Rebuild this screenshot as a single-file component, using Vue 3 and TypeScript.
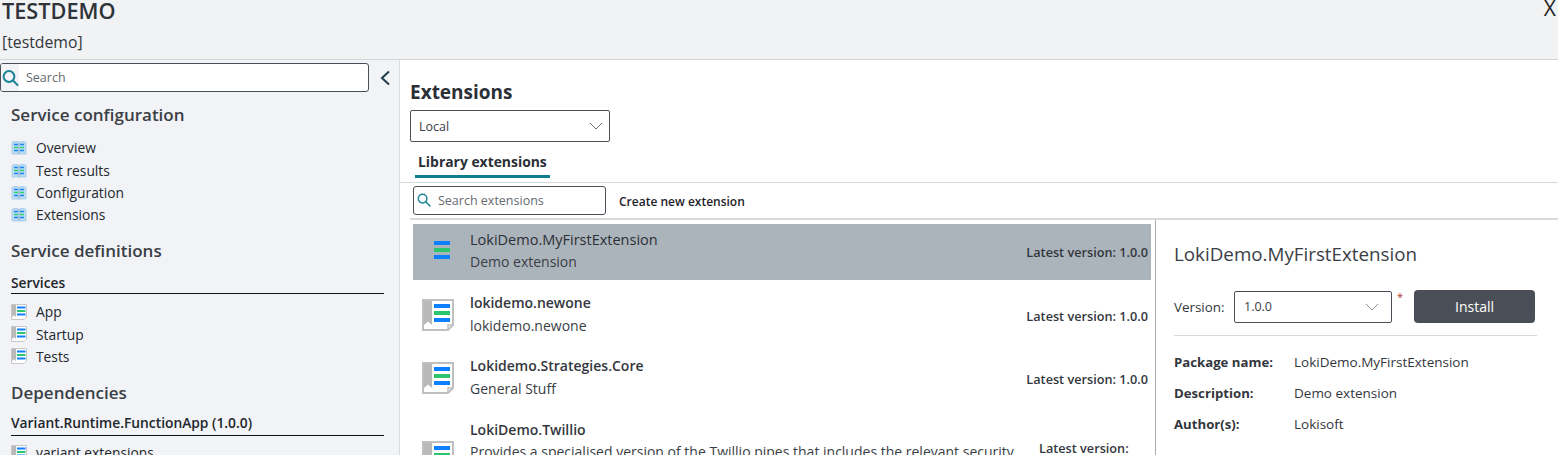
<script setup lang="ts">
interface Row { name: string; desc: string; selected?: boolean; wrap?: boolean }
const config: string[] = ['Overview', 'Test results', 'Configuration', 'Extensions']
const services: string[] = ['App', 'Startup', 'Tests']
const rows: Row[] = [
  { name: 'LokiDemo.MyFirstExtension', desc: 'Demo extension', selected: true },
  { name: 'lokidemo.newone', desc: 'lokidemo.newone' },
  { name: 'Lokidemo.Strategies.Core', desc: 'General Stuff' },
  { name: 'LokiDemo.Twillio', desc: 'Provides a specialised version of the Twillio pipes that includes the relevant security features for use in production', wrap: true }
]
const details: [string, string][] = [
  ['Package name:', 'LokiDemo.MyFirstExtension'],
  ['Description:', 'Demo extension'],
  ['Author(s):', 'Lokisoft']
]
</script>

<template>
  <div class="app">
    <header class="top">
      <div class="top-text">
        <h1>TESTDEMO</h1>
        <p>[testdemo]</p>
      </div>
      <span class="close">X</span>
    </header>
    <div class="body">
      <aside class="side">
        <div class="side-search-row">
          <div class="side-search">
            <span class="side-search-icon">
              <svg width="18" height="18" viewBox="0 0 18 18"><circle cx="8" cy="7.500" r="5.400" fill="none" stroke="#1a8596" stroke-width="2"/><path d="M12 11.500 16.500 16" stroke="#1a8596" stroke-width="2" stroke-linecap="round"/></svg>
            </span>
            <span class="ph">Search</span>
          </div>
          <svg class="chev" width="12" height="16" viewBox="0 0 12 16"><path d="M10 1.500 3 8l7 6.500" fill="none" stroke="#1f3d4a" stroke-width="2"/></svg>
        </div>
        <h2 class="first">Service configuration</h2>
        <ul class="nav">
          <li v-for="c in config" :key="c">
            <svg width="16" height="15" viewBox="0 0 16 15">
              <path d="M1 2.500 3 1.500h3.500L8 2.500l1.500-1H13l2 1V14H1z" fill="#bcdcf5" stroke="#a3c6e4" stroke-width=".8"/>
              <path d="M8 2.500V14" stroke="#7f9db5" stroke-width=".7"/>
              <path d="M3 4.500h4M9 4.500h4M3 10.500h4M9 10.500h4" stroke="#1b82f0" stroke-width="1.500"/>
              <path d="M3 7.500h4M9 7.500h4" stroke="#2fd070" stroke-width="1.600"/>
            </svg>
            <span>{{ c }}</span>
          </li>
        </ul>
        <h2 class="defs">Service definitions</h2>
        <h3>Services</h3>
        <ul class="nav nav-ruled">
          <li v-for="s in services" :key="s">
            <svg width="16" height="16" viewBox="0 0 32 32">
              <path d="M1 1h30v25l-5 5H1z" fill="#fff" stroke="#c6c6c6" stroke-width="2"/>
              <path d="M2 2h8v24l-4-3.500L2 26z" fill="#b9b9b9"/>
              <path d="M12 5h17v4H12zM12 19h17v4H12z" fill="#0d80ff"/>
              <path d="M12 12h17v4H12z" fill="#2cc56f"/>
            </svg>
            <span>{{ s }}</span>
          </li>
        </ul>
        <h2 class="deps">Dependencies</h2>
        <h3 class="variant">Variant.Runtime.FunctionApp (1.0.0)</h3>
        <ul class="nav nav-ruled-2">
          <li>
            <svg width="16" height="16" viewBox="0 0 32 32">
              <path d="M1 1h30v25l-5 5H1z" fill="#fff" stroke="#c6c6c6" stroke-width="2"/>
              <path d="M2 2h8v24l-4-3.500L2 26z" fill="#b9b9b9"/>
              <path d="M12 5h17v4H12zM12 19h17v4H12z" fill="#0d80ff"/>
              <path d="M12 12h17v4H12z" fill="#2cc56f"/>
            </svg>
            <span>variant.extensions</span>
          </li>
        </ul>
      </aside>
      <main class="main">
        <div class="main-head">
          <h2 class="ext-title">Extensions</h2>
          <div class="select local">
            <span>Local</span>
            <svg width="14" height="8" viewBox="0 0 14 8"><path d="M1 1l6 6 6-6" fill="none" stroke="#6b7078" stroke-width="1"/></svg>
          </div>
          <div class="tab">Library extensions</div>
        </div>
        <div class="toolbar">
          <div class="ext-search">
            <svg width="14" height="14" viewBox="0 0 14 14"><circle cx="5.600" cy="5.600" r="4.300" fill="none" stroke="#1a8596" stroke-width="1.500"/><path d="M8.800 8.800 13 13" stroke="#1a8596" stroke-width="1.500" stroke-linecap="round"/></svg>
            <span class="ph">Search extensions</span>
          </div>
          <span class="create">Create new extension</span>
        </div>
        <div class="split">
          <div class="list">
            <div v-for="r in rows" :key="r.name" class="row" :class="{ selected: r.selected, wrap: r.wrap }">
              <svg class="row-icon" width="32" height="32" viewBox="0 0 32 32">
                <template v-if="!r.selected">
                  <path d="M1 1h30v25l-5 5H1z" fill="#fff" stroke="#c0c0c0" stroke-width="2"/>
                  <path d="M26 31v-5h5" fill="none" stroke="#c0c0c0" stroke-width="1.500"/>
                  <path d="M2 2h8v24l-4-3.500L2 26z" fill="#b9b9b9"/>
                </template>
                <path d="M12 5h16v4H12zM12 19h16v4H12z" fill="#0d80ff"/>
                <path d="M12 12h16v4H12z" fill="#2cc56f"/>
              </svg>
              <div class="row-text">
                <div class="row-name">{{ r.name }}</div>
                <div class="row-desc">{{ r.desc }}</div>
              </div>
              <div class="row-ver">Latest version: 1.0.0</div>
            </div>
          </div>
          <section class="detail">
            <h2 class="detail-title">LokiDemo.MyFirstExtension</h2>
            <div class="install-row">
              <label>Version:</label>
              <div class="select ver">
                <span>1.0.0</span>
                <svg width="14" height="8" viewBox="0 0 14 8"><path d="M1 1l6 6 6-6" fill="none" stroke="#8a8f96" stroke-width="1"/></svg>
              </div>
              <span class="req">*</span>
              <button class="install">Install</button>
            </div>
            <dl class="meta">
              <template v-for="d in details" :key="d[0]">
                <dt>{{ d[0] }}</dt>
                <dd>{{ d[1] }}</dd>
              </template>
            </dl>
          </section>
        </div>
      </main>
    </div>
  </div>
</template>

<style>
html, body { margin: 0; overflow: hidden; background: #fff; }
</style>

<style scoped>
.app {
  width: 1558px;
  height: 455px;
  overflow: hidden;
  font-family: "Open Sans", "Noto Sans", sans-serif;
  font-size: 13.500px;
  color: #2b2f36;
  display: flex;
  flex-direction: column;
}
h1, h2, h3, p, ul, dl, dd { margin: 0; padding: 0; }
.top {
  height: 59px;
  flex: none;
  background: #f1f2f4;
  border-bottom: 1px solid #d4d5d7;
  display: flex;
  justify-content: space-between;
}
.top-text { padding-left: 2px; }
.top h1 { font-size: 21.700px; font-weight: 600; line-height: 22px; color: #2f333a; }
.top p { font-size: 15.800px; line-height: 20px; margin-top: 10px; color: #33373d; }
.close { font-size: 21px; line-height: 17px; padding-right: 2px; color: #222; }
.body { flex: 1; display: flex; min-height: 0; }
.side {
  width: 399px;
  flex: none;
  background: #f1f3f6;
  border-right: 1px solid #d9dade;
  overflow: hidden;
}
.side-search-row { display: flex; align-items: center; padding-top: 3px; }
.side-search {
  width: 367px;
  height: 27px;
  background: #fff;
  border: 1px solid #4b5058;
  border-radius: 3px;
  display: flex;
  align-items: center;
  overflow: hidden;
}
.side-search-icon {
  width: 18px;
  height: 100%;
  background: #f1f3f6;
  display: flex;
  align-items: center;
}
.ph { color: #666a70; padding-left: 7px; font-size: 12.500px; }
.chev { margin-left: 10px; }
.side h2 {
  font-size: 17px;
  font-weight: 600;
  color: #3a3e45;
  line-height: 22px;
  margin: 13px 0 0 11px;
}
.side h2.first { margin-top: 12px; }
.side h2.defs { margin-top: 14.400px; }
.side h3 {
  font-size: 13.800px;
  font-weight: 600;
  line-height: 20px;
  margin: 11px 15px 0 11px;
  border-bottom: 1px solid #111;
  color: #22262c;
}
.nav { list-style: none; margin: 10.600px 0 0 11px; }
.nav li {
  height: 22.300px;
  display: flex;
  align-items: center;
  gap: 9px;
  font-size: 13.800px;
  color: #23272d;
}
.nav-ruled { margin-top: 6.500px; }
.side h2.deps { margin-top: 14px; }
.side h3.variant { margin-top: 9px; padding-bottom: 2px; }
.nav-ruled-2 { margin-top: 6px; }
.main { flex: 1; min-width: 0; background: #fff; display: flex; flex-direction: column; }
.main-head {
  padding-left: 10px;
  padding-top: 20px;
  border-bottom: 1px solid #d9d9d9;
  height: 123px;
  box-sizing: border-box;
}
.ext-title { font-size: 19px; font-weight: 700; line-height: 24px; color: #2b2f36; }
.select {
  box-sizing: border-box;
  display: flex;
  align-items: center;
  justify-content: space-between;
  background: #fff;
  border: 1px solid #4b5058;
  border-radius: 2px;
  font-size: 12.500px;
  color: #3a3e45;
}
.local { width: 200px; height: 32px; margin-top: 6px; padding: 0 6px 0 8px; }
.tab {
  display: inline-block;
  margin: 10px 0 0 5px;
  padding: 0 3px;
  height: 26px;
  line-height: 20px;
  box-sizing: border-box;
  border-bottom: 3px solid #0e7f8f;
  font-size: 13.900px;
  font-weight: 700;
  color: #2b2f36;
  vertical-align: top;
}
.toolbar {
  display: flex;
  align-items: center;
  height: 37px;
  box-sizing: border-box;
  margin-left: 10px;
  padding: 3px 0 4px 3px;
  border-bottom: 2px solid #d8d8d8;
}
.ext-search {
  box-sizing: border-box;
  width: 193px;
  height: 29px;
  border: 1px solid #4b5058;
  border-radius: 3px;
  display: flex;
  align-items: center;
  padding-left: 3px;
}
.create { margin-left: 13px; font-size: 12px; font-weight: 600; color: #1f2329; padding-top: 2px; }
.split { flex: 1; display: flex; min-height: 0; }
.list {
  width: 756px;
  flex: none;
  box-sizing: border-box;
  border-right: 1px solid #a9adb2;
  padding: 4px 4px 0 13px;
  display: flex;
  flex-direction: column;
  gap: 7px;
}
.row {
  flex: none;
  height: 56px;
  display: flex;
  align-items: center;
  padding: 0 3px 0 9px;
}
.row.selected { background: #acb4bb; }
.row-icon { flex: none; }
.row-text { flex: 1; min-width: 0; padding: 0 0 2px 16px; }
.row-name { font-size: 14px; font-weight: 600; line-height: 20px; color: #33373d; }
.selected .row-name { font-size: 14.500px; font-weight: 400; color: #2b2f36; }
.row-desc { font-size: 14px; line-height: 20px; margin-top: 3px; color: #3a3e45; }
.selected .row-desc { margin-top: 2px; }
.row-ver { flex: none; padding-top: 1px; font-size: 12.700px; font-weight: 600; color: #33373d; }
.selected .row-ver { padding-top: 0; }
.wrap { align-items: flex-start; height: 90px; padding-top: 7px; }
.wrap .row-icon { margin-top: 21px; }
.wrap .row-desc { margin-top: 2px; }
.wrap .row-ver { width: 109px; margin-left: 20px; padding-top: 18px; line-height: 20px; }
.detail { flex: 1; min-width: 0; padding: 22px 21px 0 18px; }
.detail-title { font-size: 18.800px; font-weight: 400; line-height: 24px; color: #3a3e45; }
.install-row {
  display: flex;
  align-items: center;
  height: 33px;
  margin-top: 24px;
  padding-bottom: 12px;
  border-bottom: 1px solid #d9d9d9;
}
.install-row label { width: 60px; font-size: 13.400px; color: #33373d; }
.ver { width: 158px; height: 32px; padding: 0 12px 0 9px; }
.req { color: #a33; font-size: 11px; align-self: flex-start; margin: -1px 0 0 5px; width: 17px; }
.install {
  width: 121px;
  height: 33px;
  border: 0;
  border-radius: 4px;
  background: #4a4f57;
  color: #fff;
  font: inherit;
  font-size: 14px;
}
.meta {
  display: grid;
  grid-template-columns: 120px 1fr;
  row-gap: 11px;
  margin-top: 16px;
  font-size: 13.500px;
  line-height: 20px;
}
.meta dt { font-size: 13.200px; font-weight: 700; color: #33373d; }
.meta dd { color: #33373d; }
</style>
